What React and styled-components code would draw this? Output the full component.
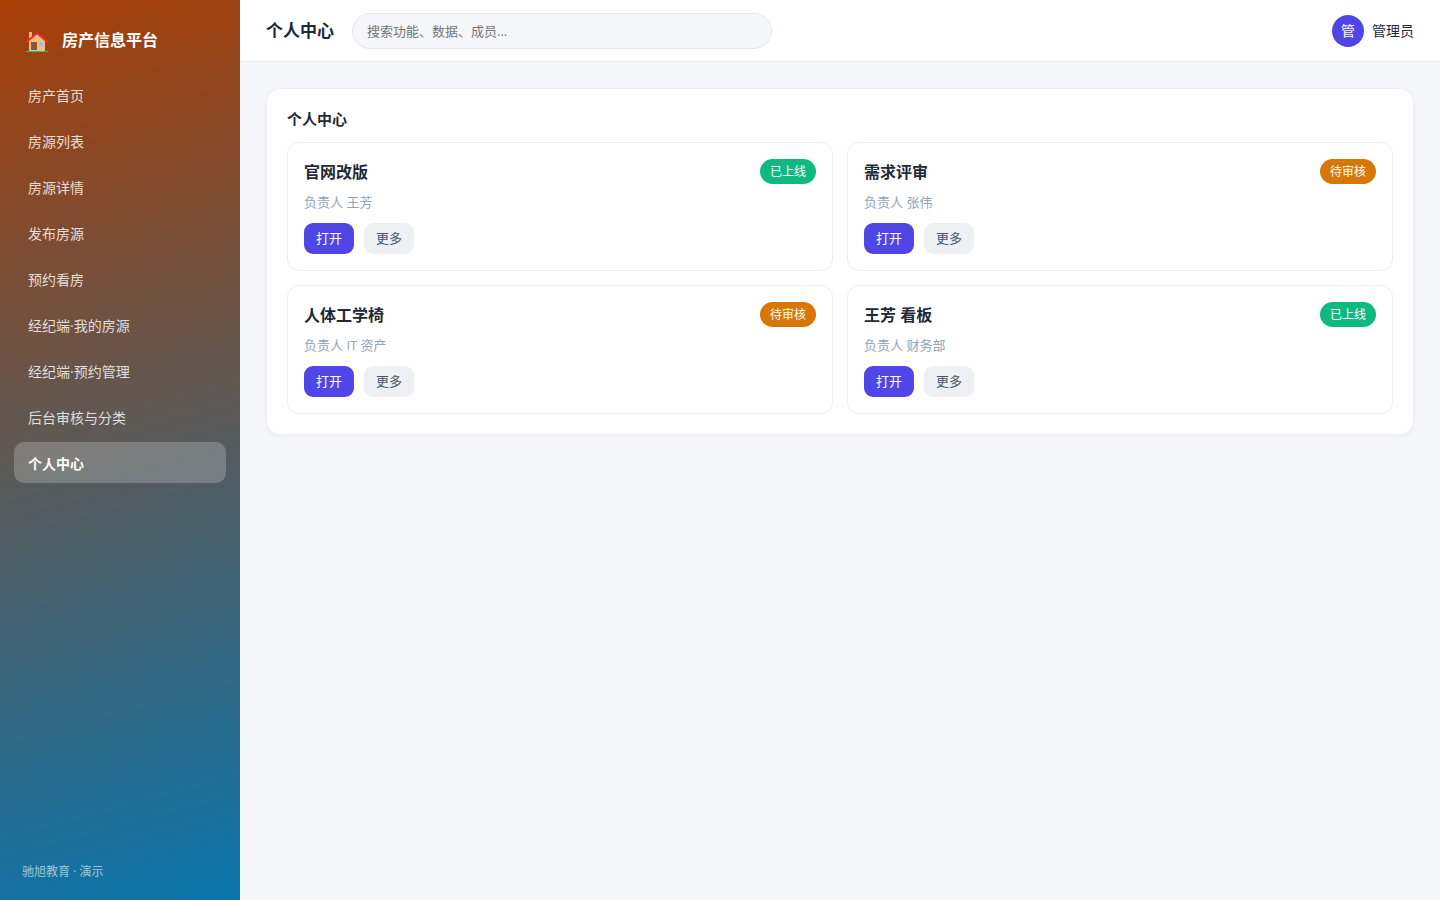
import React, { useState } from 'react';
import styled, { createGlobalStyle } from 'styled-components';

const GlobalStyle = createGlobalStyle`
  * {
    box-sizing: border-box;
  }

  body {
    margin: 0;
    background: #f5f7fb;
    color: #1f2937;
    font-family: "Open Sans", "Noto Sans CJK SC", sans-serif;
    font-size: 14px;
    line-height: 20px;
  }

  button, input {
    font-family: inherit;
  }
`;

const Layout = styled.div`
  display: flex;
  min-height: 100vh;
`;

const Sidebar = styled.aside`
  display: flex;
  flex-direction: column;
  flex: 0 0 240px;
  padding: 22px 14px 18px;
  background: linear-gradient(165deg, #a83e06 0%, #0a76ac 100%);
  color: #fff;
`;

const Brand = styled.div`
  display: flex;
  align-items: center;
  gap: 12px;
  height: 36px;
  margin-bottom: 16px;
  padding: 0 10px;
  font-size: 16px;
  font-weight: 700;
`;

const Logo = styled.svg`
  width: 26px;
  height: 24px;
  margin-top: 4px;
`;

const Nav = styled.nav`
  display: flex;
  flex-direction: column;
  gap: 5px;
`;

const NavItem = styled.a`
  padding: 12px 14px 10px;
  border-radius: 10px;
  background: ${({ $active }) => $active ? 'rgba(255, 255, 255, 0.22)' : 'transparent'};
  color: ${({ $active }) => $active ? '#fff' : 'rgba(255, 255, 255, 0.82)'};
  font-weight: ${({ $active }) => $active ? 700 : 400};
  line-height: 19px;
  text-decoration: none;
`;

const SidebarFooter = styled.footer`
  margin-top: auto;
  padding: 0 8px;
  color: rgba(255, 255, 255, 0.6);
  font-size: 12px;
`;

const Main = styled.div`
  flex: 1;
  min-width: 0;
`;

const Header = styled.header`
  display: flex;
  align-items: center;
  gap: 18px;
  height: 62px;
  padding: 0 26px;
  border-bottom: 1px solid #ebedf1;
  background: #fff;
`;

const PageTitle = styled.h1`
  margin: 0;
  font-size: 17px;
  font-weight: 700;
`;

const Search = styled.input`
  flex: 0 1 420px;
  min-width: 0;
  height: 36px;
  padding: 0 14px;
  border: 1px solid #e5e7eb;
  border-radius: 18px;
  outline: none;
  background: #f5f7fb;
  color: #1f2937;
  font-size: 13px;

  &::placeholder {
    color: #757575;
  }
`;

const User = styled.div`
  display: flex;
  align-items: center;
  gap: 8px;
  margin-left: auto;
`;

const Avatar = styled.span`
  display: flex;
  align-items: center;
  justify-content: center;
  width: 32px;
  height: 32px;
  border-radius: 50%;
  background: #4f46e5;
  color: #fff;
`;

const Content = styled.main`
  padding: 26px;
`;

const Panel = styled.section`
  padding: 20px;
  border: 1px solid #eef0f3;
  border-radius: 14px;
  background: #fff;
  box-shadow: 0 1px 4px rgba(15, 23, 42, 0.05);
`;

const PanelTitle = styled.h2`
  margin: 0 0 13px;
  font-size: 15px;
  font-weight: 700;
`;

const Grid = styled.div`
  display: grid;
  grid-template-columns: 1fr 1fr;
  gap: 14px;
`;

const Card = styled.article`
  padding: 16px;
  border: 1px solid #eeeff2;
  border-radius: 12px;
`;

const CardHead = styled.div`
  display: flex;
  align-items: center;
  justify-content: space-between;
`;

const CardTitle = styled.h3`
  margin: 0;
  font-size: 16px;
  font-weight: 700;
`;

const Badge = styled.span`
  padding: 3px 10px;
  border-radius: 13px;
  background: ${({ $status }) => $status === 'online' ? '#10b981' : '#d97706'};
  color: #fff;
  font-size: 12px;
  line-height: 19px;
`;

const Owner = styled.p`
  margin: 8px 0 11px;
  color: #94a3b8;
  font-size: 13px;
`;

const Actions = styled.div`
  display: flex;
  gap: 10px;
`;

const Button = styled.button`
  padding: 5px 12px 6px;
  border: none;
  border-radius: 9px;
  background: ${({ $primary }) => $primary ? '#4f46e5' : '#eef0f4'};
  color: ${({ $primary }) => $primary ? '#fff' : '#475569'};
  font-size: 13px;
  line-height: 20px;
  cursor: pointer;
`;

const navItems = [
  '房产首页',
  '房源列表',
  '房源详情',
  '发布房源',
  '预约看房',
  '经纪端·我的房源',
  '经纪端·预约管理',
  '后台审核与分类',
  '个人中心',
];

const projects = [
  { id: 1, title: '官网改版', owner: '王芳', status: 'online' },
  { id: 2, title: '需求评审', owner: '张伟', status: 'pending' },
  { id: 3, title: '人体工学椅', owner: 'IT 资产', status: 'pending' },
  { id: 4, title: '王芳 看板', owner: '财务部', status: 'online' },
];

const HouseLogo = () => (
  <Logo viewBox="0 0 26 24" aria-hidden="true">
    <path d="M5 2h3v9H5z" fill="#f2b66d" />
    <path d="M5 11 13 4l8 7v11H5z" fill="#f5bd78" />
    <path d="M2 12.500 13 3l11 9.500" fill="none" stroke="#f5292e" strokeWidth="1.700" />
    <path d="M7 12h6v9H7z" fill="#8d5343" />
    <path d="M15 12h4v4h-4z" fill="#82caff" />
    <path d="M6 20h8v1H6z" fill="#c9c4c1" />
    <path d="M2 21h22v1H2z" fill="#16c784" />
  </Logo>
);

const ProjectCard = ({ project }) => (
  <Card>
    <CardHead>
      <CardTitle>{project.title}</CardTitle>
      <Badge $status={project.status}>{project.status === 'online' ? '已上线' : '待审核'}</Badge>
    </CardHead>
    <Owner>负责人 {project.owner}</Owner>
    <Actions>
      <Button type="button" $primary>打开</Button>
      <Button type="button">更多</Button>
    </Actions>
  </Card>
);

const App = () => {
  const [active, setActive] = useState('个人中心');
  const [keyword, setKeyword] = useState('');

  const handleNavigate = (e, item) => {
    e.preventDefault();
    setActive(item);
  };

  return (
    <Layout>
      <GlobalStyle />
      <Sidebar>
        <Brand>
          <HouseLogo />
          <span>房产信息平台</span>
        </Brand>
        <Nav>
          {navItems.map(item => (
            <NavItem key={item} href="#" $active={item === active} onClick={(e) => handleNavigate(e, item)}>
              {item}
            </NavItem>
          ))}
        </Nav>
        <SidebarFooter>驰旭教育 · 演示</SidebarFooter>
      </Sidebar>
      <Main>
        <Header>
          <PageTitle>{active}</PageTitle>
          <Search
            type="search"
            aria-label="搜索"
            placeholder="搜索功能、数据、成员..."
            value={keyword}
            onChange={(e) => setKeyword(e.target.value)}
          />
          <User>
            <Avatar>管</Avatar>
            <span>管理员</span>
          </User>
        </Header>
        <Content>
          <Panel>
            <PanelTitle>{active}</PanelTitle>
            <Grid>
              {projects.map(project => (
                <ProjectCard key={project.id} project={project} />
              ))}
            </Grid>
          </Panel>
        </Content>
      </Main>
    </Layout>
  );
};

export default App;
